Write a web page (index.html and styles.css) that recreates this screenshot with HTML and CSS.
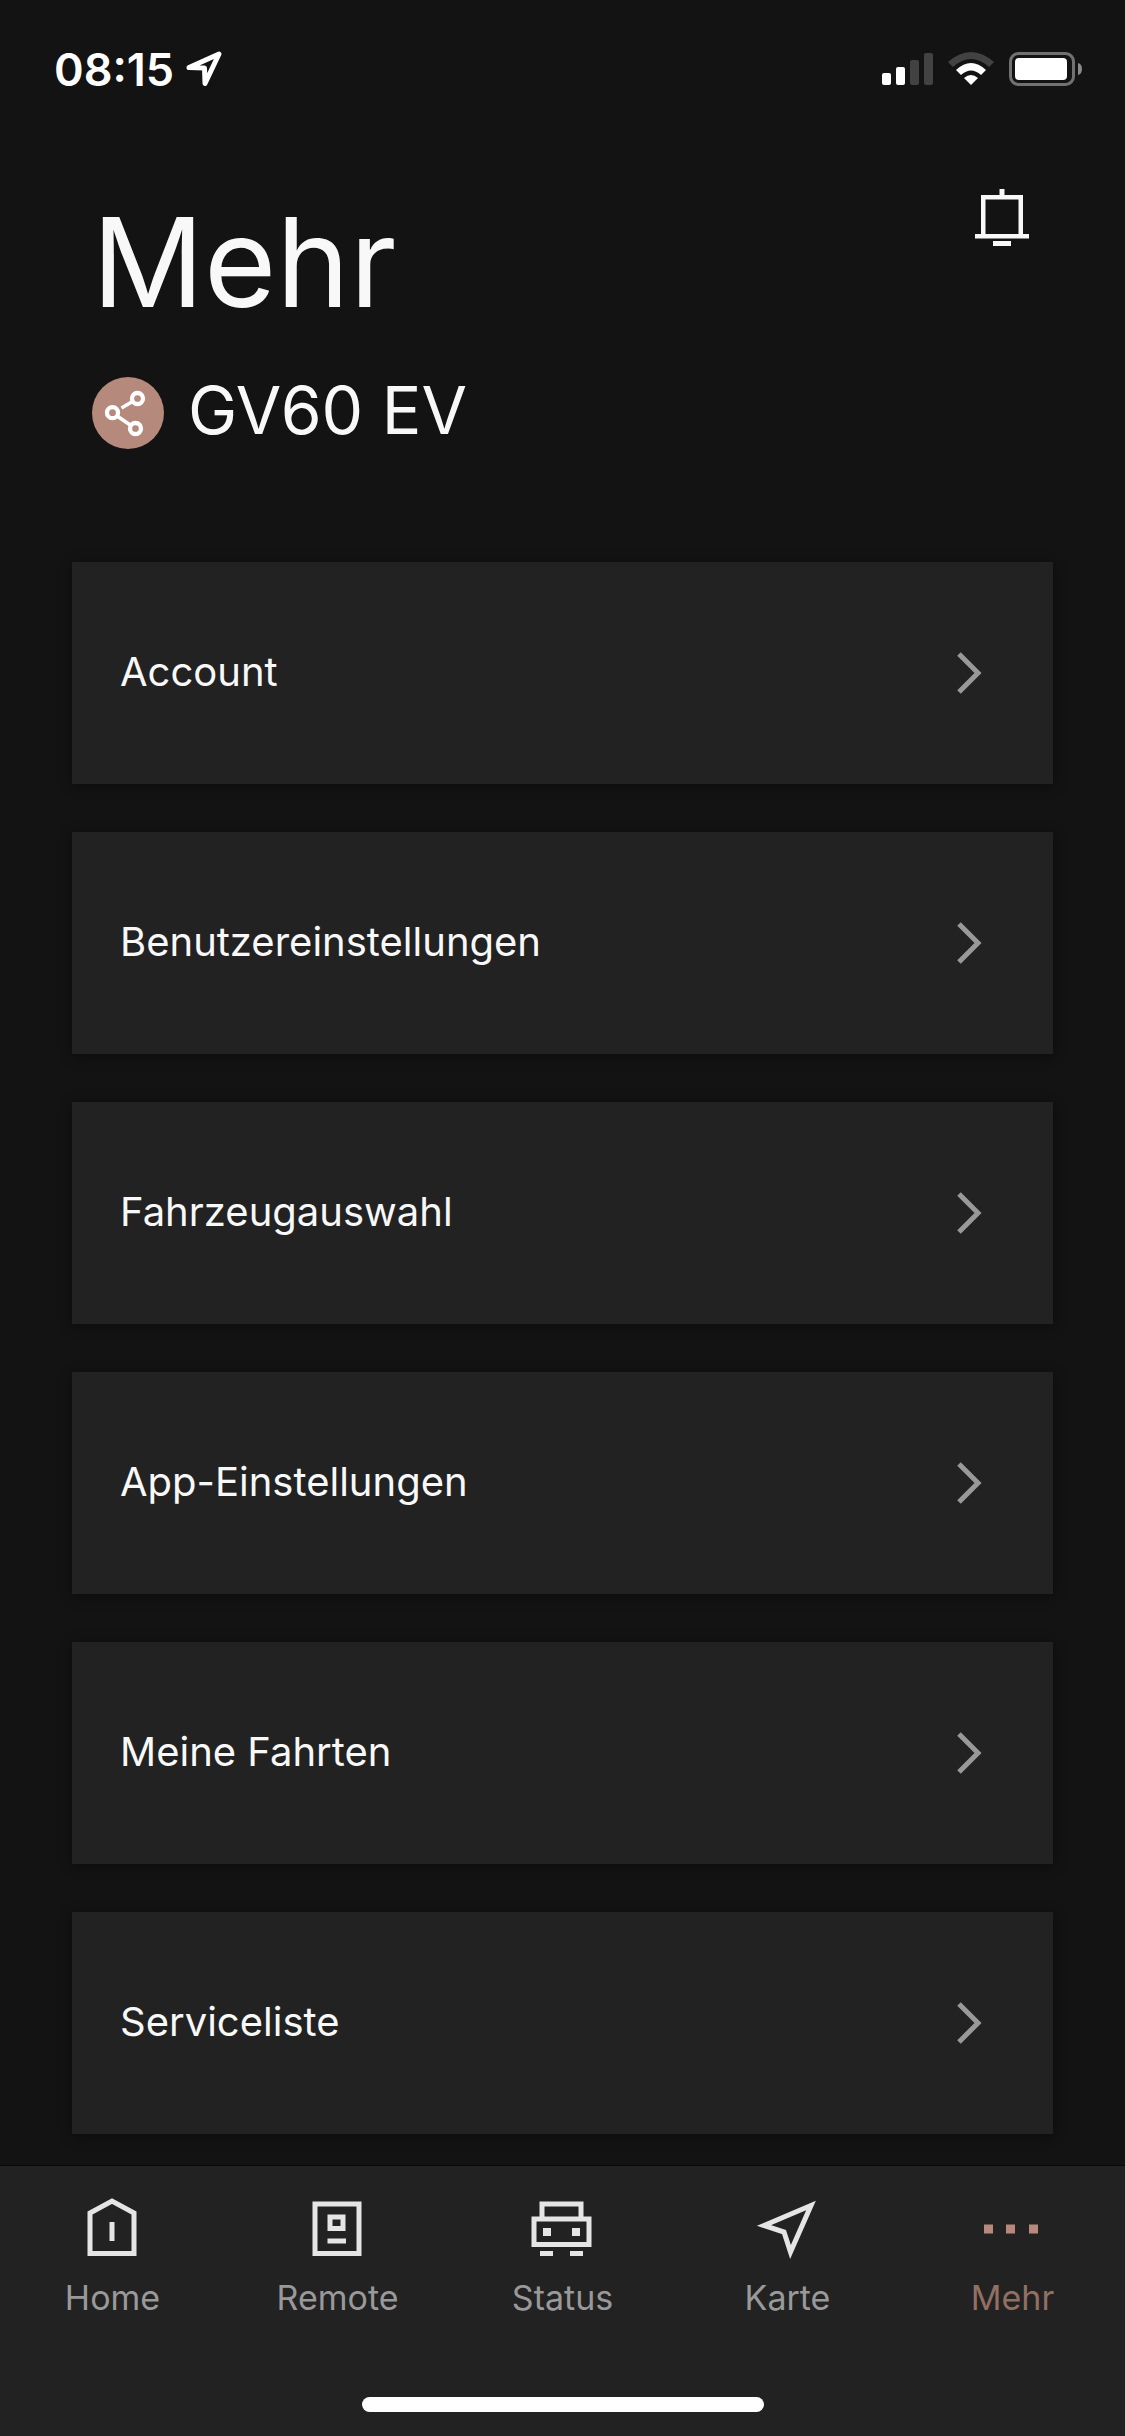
FILE: index.html
```html
<!DOCTYPE html>
<html lang="de">
<head>
    <meta charset="UTF-8">
    <meta name="viewport" content="width=device-width, initial-scale=1.0">
    <title>Mehr</title>
    <link rel="stylesheet" href="styles.css">
</head>
<body>
    <div class="status-bar">
        <div class="status-left">
            <span class="time">08:15</span>
            <svg width="36" height="36" viewBox="0 0 36 36" fill="none" stroke="#fff" stroke-width="5" stroke-linejoin="round">
                <path d="M3 16.500 L33 3 L19 32.500 L18.500 17 Z"/>
            </svg>
        </div>
        <div class="status-right">
            <svg width="51" height="34" viewBox="0 0 51 34">
                <rect x="0" y="21" width="9" height="12" rx="2" fill="#fff"/>
                <rect x="14" y="15" width="9" height="18" rx="2" fill="#fff"/>
                <rect x="28" y="8" width="9" height="25" rx="2" fill="#424242"/>
                <rect x="42" y="1" width="9" height="32" rx="2" fill="#424242"/>
            </svg>
            <svg width="46" height="34" viewBox="0 0 46 34">
                <path d="M0 10 Q23 -10 46 10 L41 15 Q23 -1 5 15 Z" fill="#424242"/>
                <path d="M8 18 Q23 4 38 18 L33 23 Q23 14 13 23 Z" fill="#fff"/>
                <path d="M16 26 Q23 20 30 26 L23 33 Z" fill="#fff"/>
            </svg>
            <svg width="74" height="34" viewBox="0 0 74 34">
                <rect x="1.500" y="1.500" width="63" height="31" rx="8" fill="none" stroke="#717171" stroke-width="3"/>
                <rect x="6" y="6" width="52" height="22" rx="4" fill="#fff"/>
                <path d="M69 11 Q73 12 73 17 Q73 22 69 23 Z" fill="#8a8a8a"/>
            </svg>
        </div>
    </div>

    <header class="header">
        <div class="title-row">
            <h1>Mehr</h1>
            <button class="bell" aria-label="Benachrichtigungen">
                <svg width="54" height="57" viewBox="0 0 54 57" fill="#f8f8f8">
                    <rect x="24.500" y="0" width="5" height="7"/>
                    <path d="M6 6 H48 V45 H54 V49.500 H0 V45 H6 Z M10.500 10.500 V45 H43.500 V10.500 Z" fill-rule="evenodd"/>
                    <rect x="18" y="52" width="18" height="5"/>
                </svg>
            </button>
        </div>
        <div class="vehicle">
            <svg width="72" height="72" viewBox="0 0 72 72" fill="none" stroke="#fff">
                <circle cx="36" cy="36" r="36" fill="#b5897b" stroke="none"/>
                <g stroke-width="4.300">
                    <circle cx="45.500" cy="21.500" r="5.500"/>
                    <circle cx="20.500" cy="35.700" r="5.500"/>
                    <circle cx="43.500" cy="51.500" r="5.500"/>
                </g>
                <path d="M29.500 31 L40.500 24.500 M25 39 L39 48.500" stroke-width="3.600"/>
            </svg>
            <h2>GV60 EV</h2>
        </div>
    </header>

    <main class="menu">
        <a class="card" href="#account">
            <span>Account</span>
            <svg class="chevron" viewBox="0 0 24 42"><path d="M2 2 L21 21 L2 40"/></svg>
        </a>
        <a class="card" href="#benutzereinstellungen">
            <span>Benutzereinstellungen</span>
            <svg class="chevron" viewBox="0 0 24 42"><path d="M2 2 L21 21 L2 40"/></svg>
        </a>
        <a class="card" href="#fahrzeugauswahl">
            <span>Fahrzeugauswahl</span>
            <svg class="chevron" viewBox="0 0 24 42"><path d="M2 2 L21 21 L2 40"/></svg>
        </a>
        <a class="card" href="#app-einstellungen">
            <span>App-Einstellungen</span>
            <svg class="chevron" viewBox="0 0 24 42"><path d="M2 2 L21 21 L2 40"/></svg>
        </a>
        <a class="card" href="#meine-fahrten">
            <span>Meine Fahrten</span>
            <svg class="chevron" viewBox="0 0 24 42"><path d="M2 2 L21 21 L2 40"/></svg>
        </a>
        <a class="card" href="#serviceliste">
            <span>Serviceliste</span>
            <svg class="chevron" viewBox="0 0 24 42"><path d="M2 2 L21 21 L2 40"/></svg>
        </a>
    </main>

    <footer class="tab-bar">
        <nav class="tabs">
            <a class="tab" href="#home">
                <svg class="tab-icon" viewBox="0 0 60 60">
                    <path d="M7 55.500 V15 L29 3 L51 15 V55.500 Z M29 24 V43"/>
                </svg>
                <span>Home</span>
            </a>
            <a class="tab" href="#remote">
                <svg class="tab-icon" viewBox="0 0 60 60">
                    <path d="M7 6 H51 V55.500 H7 Z M22 19 H35 V30.500 H22 Z M19.500 43 H38"/>
                </svg>
                <span>Remote</span>
            </a>
            <a class="tab" href="#status">
                <svg class="tab-icon" viewBox="0 0 60 60">
                    <path d="M9 21 V6 H48 V21 M1 21 H56 V46.500 H1 Z M7 55.500 H20 M37 55.500 H50"/>
                    <path d="M10 34 H18 M39 34 H47" stroke-width="8"/>
                </svg>
                <span>Status</span>
            </a>
            <a class="tab" href="#karte">
                <svg class="tab-icon" viewBox="0 0 60 60">
                    <path d="M6 27.500 L53 7.500 L32.500 54 L26 34 Z"/>
                </svg>
                <span>Karte</span>
            </a>
            <a class="tab active" href="#mehr">
                <svg class="tab-icon" viewBox="0 0 60 60">
                    <path d="M1 31 H10 M23 31 H32 M46 31 H55" stroke-width="9"/>
                </svg>
                <span>Mehr</span>
            </a>
        </nav>
        <div class="home-indicator"></div>
    </footer>
</body>
</html>
```
FILE: styles.css
```css
* {
    box-sizing: border-box;
}

body {
    font-family: Inter, sans-serif;
    background-color: #131313;
    color: #f8f8f8;
    display: flex;
    flex-direction: column;
    min-height: 100vh;
    margin: 0;
}

svg {
    display: block;
    overflow: visible;
}

a {
    color: inherit;
    text-decoration: none;
}

h1,
h2 {
    margin: 0;
    font-weight: 400;
}

/* status bar */
.status-bar {
    display: flex;
    justify-content: space-between;
    align-items: center;
    height: 138px;
    padding: 0 42px 0 54px;
    color: #fff;
}

.status-left {
    display: flex;
    align-items: center;
    gap: 12px;
}

.time {
    font-size: 45px;
    font-weight: 600;
}

.status-right {
    display: flex;
    align-items: center;
    gap: 15px;
}

/* header */
.header {
    padding: 48px 96px 0 92px;
}

.title-row {
    display: flex;
    justify-content: space-between;
    align-items: flex-start;
}

h1 {
    font-size: 124px;
    line-height: 152px;
}

.bell {
    background: none;
    border: none;
    padding: 3px 0 0;
    cursor: pointer;
}

.vehicle {
    display: flex;
    align-items: center;
    gap: 24px;
    margin-top: 32px;
}

h2 {
    font-size: 66px;
    line-height: 80px;
    padding-bottom: 6px;
}

/* menu list */
.menu {
    display: flex;
    flex-direction: column;
    gap: 48px;
    padding: 106px 72px 31px;
}

.card {
    display: flex;
    justify-content: space-between;
    align-items: center;
    height: 222px;
    padding: 0 72px 0 48px;
    background-color: #222;
    box-shadow: 0 2px 12px rgba(0, 0, 0, 0.4);
    font-size: 40px;
}

.card span {
    padding-bottom: 3px;
}

.chevron {
    width: 24px;
    height: 42px;
    fill: none;
    stroke: #999;
    stroke-width: 5;
}

/* bottom tabs */
.tab-bar {
    display: flex;
    flex-direction: column;
    justify-content: space-between;
    align-items: center;
    height: 271px;
    margin-top: auto;
    padding: 32px 0 24px;
    background-color: #222;
    border-top: 1px solid #090909;
}

.tabs {
    display: flex;
    width: 100%;
}

.tab {
    display: flex;
    flex: 1;
    flex-direction: column;
    align-items: center;
    gap: 16px;
    color: #999;
    font-size: 34px;
    line-height: 48px;
}

.tab-icon {
    width: 60px;
    height: 60px;
    fill: none;
    stroke: #e5e5e5;
    stroke-width: 5;
}

.tab.active {
    color: #926f63;
}

.tab.active .tab-icon {
    stroke: #b5897b;
}

.home-indicator {
    width: 402px;
    height: 15px;
    background-color: #fff;
    border-radius: 8px;
}
```
